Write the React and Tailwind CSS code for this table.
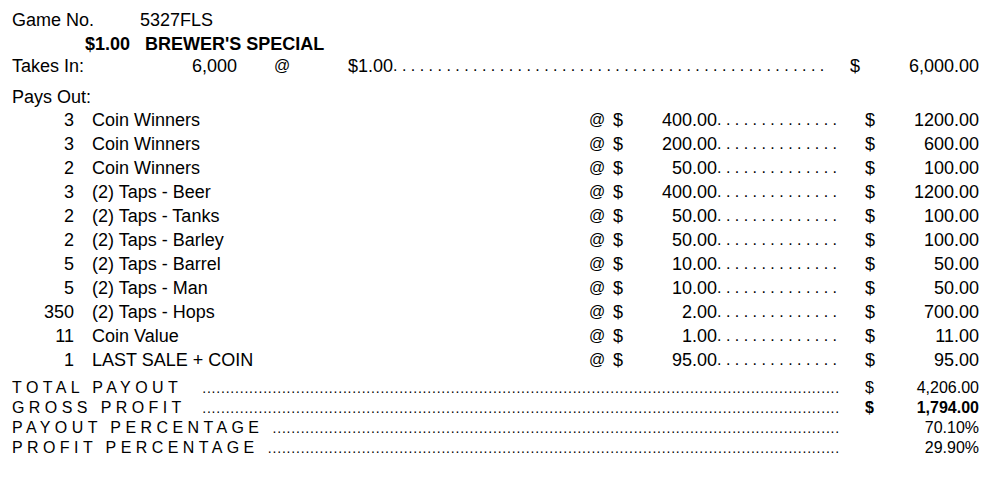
const rows = [
    { qty: '3', desc: 'Coin Winners', price: '400.00', total: '1200.00' },
    { qty: '3', desc: 'Coin Winners', price: '200.00', total: '600.00' },
    { qty: '2', desc: 'Coin Winners', price: '50.00', total: '100.00' },
    { qty: '3', desc: '(2) Taps - Beer', price: '400.00', total: '1200.00' },
    { qty: '2', desc: '(2) Taps - Tanks', price: '50.00', total: '100.00' },
    { qty: '2', desc: '(2) Taps - Barley', price: '50.00', total: '100.00' },
    { qty: '5', desc: '(2) Taps - Barrel', price: '10.00', total: '50.00' },
    { qty: '5', desc: '(2) Taps - Man', price: '10.00', total: '50.00' },
    { qty: '350', desc: '(2) Taps - Hops', price: '2.00', total: '700.00' },
    { qty: '11', desc: 'Coin Value', price: '1.00', total: '11.00' },
    { qty: '1', desc: 'LAST SALE + COIN', price: '95.00', total: '95.00' },
];

const summary = [
    { label: 'TOTAL PAYOUT', dots: 136, dollar: true, value: '4,206.00' },
    { label: 'GROSS PROFIT', dots: 136, dollar: true, value: '1,794.00', bold: true },
    { label: 'PAYOUT PERCENTAGE', dots: 121, value: '70.10%' },
    { label: 'PROFIT PERCENTAGE', dots: 122, value: '29.90%' },
];

// spaced leader dots, ". " repeated
function Dots({ count, className = '' }) {
    return (
        <div className={`whitespace-nowrap text-[16px] ${className}`}>{'. '.repeat(count).trimEnd()}</div>
    );
}

export default function App() {
    return (
        <div
            className="w-[1000px] h-[477px] bg-white text-black text-[18px] leading-[24px] pt-[8px] pl-[12px] pr-[21px]"
            style={{ fontFamily: '"Liberation Sans", Arial, sans-serif' }}
        >
            {/* Header */}
            <div className="flex h-[24px]">
                <div className="w-[128px]">Game No.</div>
                <div>5327FLS</div>
            </div>
            <div className="flex h-[24px] font-bold">
                <div className="w-[118px] text-right">$1.00</div>
                <div className="pl-[15px]">BREWER'S SPECIAL</div>
            </div>
            <div className="flex h-[20px] items-center">
                <div className="w-[180px]">Takes In:</div>
                <div className="w-[82px]">6,000</div>
                <div className="w-[74px] text-[16px]">@</div>
                <div>$1.00</div>
                <Dots count={49} className="w-[436px]" />
                <div className="flex flex-1 justify-between pl-[21px]">
                    <span>$</span>
                    <span>6,000.00</span>
                </div>
            </div>

            <div className="h-[22px] mt-[10px] flex items-center">Pays Out:</div>

            {/* Payout rows */}
            <div className="flex flex-col">
                {rows.map((r, i) => (
                    <div key={i} className="flex h-[24px] items-center">
                        <div className="w-[62px] text-right">{r.qty}</div>
                        <div className="flex-1 pl-[18px]">{r.desc}</div>
                        <div className="w-[24px] text-[16px]">@</div>
                        <div className="w-[24px]">$</div>
                        <div className="w-[80px] text-right">{r.price}</div>
                        <Dots count={14} className="w-[123px]" />
                        <div className="w-[25px]" />
                        <div className="flex w-[114px] justify-between">
                            <span>$</span>
                            <span>{r.total}</span>
                        </div>
                    </div>
                ))}
            </div>

            {/* Summary */}
            <div className="flex flex-col mt-[6px] leading-[20px]">
                {summary.map(s => (
                    <div key={s.label} className="flex h-[20px] items-center">
                        <div className="text-[16px] tracking-[4.4px] whitespace-nowrap">{s.label}</div>
                        <div className="flex-1 flex justify-end">
                            <div className="whitespace-nowrap text-[14px] tracking-[0.8px]">{'.'.repeat(s.dots)}</div>
                        </div>
                        <div className="w-[25px]" />
                        <div className={`flex w-[114px] justify-between text-[16px] ${s.bold ? 'font-bold' : ''}`}>
                            <span>{s.dollar ? '$' : ''}</span>
                            <span>{s.value}</span>
                        </div>
                    </div>
                ))}
            </div>
        </div>
    );
}
